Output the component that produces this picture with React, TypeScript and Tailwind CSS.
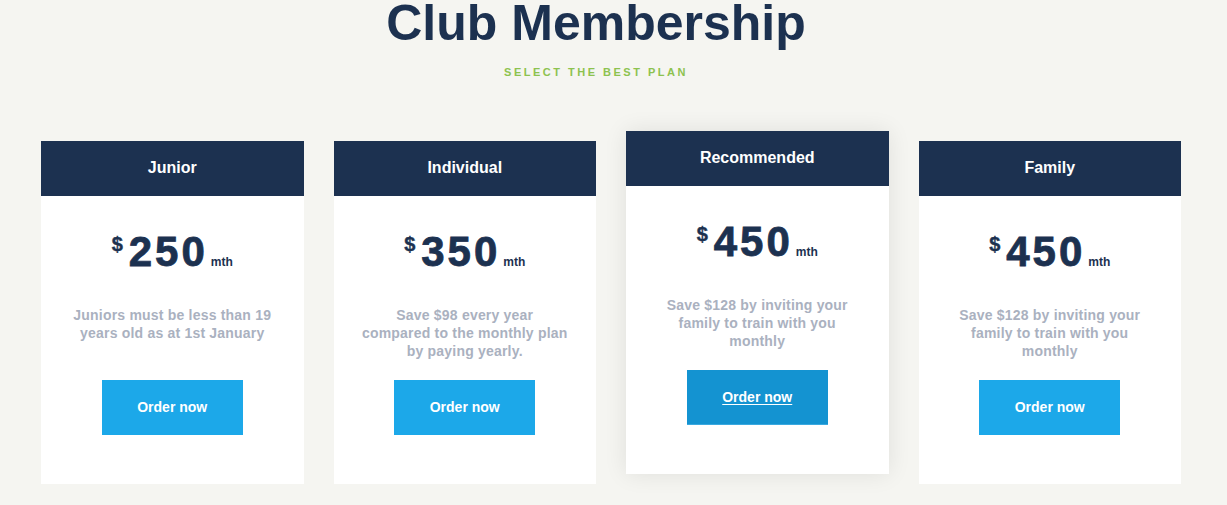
import React from "react";

type Plan = {
  name: string;
  price: string;
  desc: string;
  featured?: boolean;
};

const plans: Plan[] = [
  { name: "Junior", price: "250", desc: "Juniors must be less than 19 years old as at 1st January" },
  { name: "Individual", price: "350", desc: "Save $98 every year compared to the monthly plan by paying yearly." },
  { name: "Recommended", price: "450", desc: "Save $128 by inviting your family to train with you monthly", featured: true },
  { name: "Family", price: "450", desc: "Save $128 by inviting your family to train with you monthly" },
];

function Card({ plan }: { plan: Plan }) {
  return (
    <div
      className={
        "flex flex-col bg-white " +
        (plan.featured ? "mt-0 shadow-[0_0_22px_rgba(0,0,0,0.09)]" : "mt-[10px]")
      }
    >
      <div className="flex h-[55px] items-center justify-center bg-[#1c3150] pb-[2px] text-[16px] font-bold text-white">
        {plan.name}
      </div>
      <div className="flex flex-col items-center pb-[49px]">
        <div className="mt-[35px] flex h-[42px] items-baseline text-[#1c3150]">
          <span className="mt-[3px] self-start text-[20px] font-bold leading-none [-webkit-text-stroke:0.4px_#1c3150]">$</span>
          <span className="ml-[6px] text-[42px] font-bold leading-none tracking-[3px] [-webkit-text-stroke:0.8px_#1c3150]">
            {plan.price}
          </span>
          <span className="ml-[3px] text-[12px] font-bold leading-none">mth</span>
        </div>
        <p className="mt-[33px] h-[54px] w-[206px] text-center text-[14px] font-bold leading-[18px] tracking-[0.2px] text-[#aab1bf]">
          {plan.desc}
        </p>
        <button
          className={
            "mt-[20px] flex h-[55px] w-[141px] items-center justify-center text-[14px] font-bold text-white " +
            (plan.featured
              ? "bg-[#1493d1] underline underline-offset-2 border-b border-[#3aa9e0]"
              : "bg-[#1ca8e9]")
          }
        >
          Order now
        </button>
      </div>
    </div>
  );
}

export default function App() {
  return (
    <div
      className="min-h-[505px] w-full bg-[#f5f5f1]"
      style={{ fontFamily: '"Liberation Sans", Arial, sans-serif' }}
    >
      <div className="ml-[41px] w-[1140px]">
        <div className="flex flex-col items-center pr-[30px]">
          <h1 className="text-[50px] font-bold leading-[46px] text-[#1c3150]">Club Membership</h1>
          <div className="mt-[18px] text-[11px] font-bold leading-[16px] tracking-[2.5px] text-[#8dc24f]">
            SELECT THE BEST PLAN
          </div>
        </div>
        <div className="mt-[51px] grid grid-cols-4 items-start gap-[30px]">
          {plans.map((p) => (
            <Card key={p.name} plan={p} />
          ))}
        </div>
      </div>
    </div>
  );
}
